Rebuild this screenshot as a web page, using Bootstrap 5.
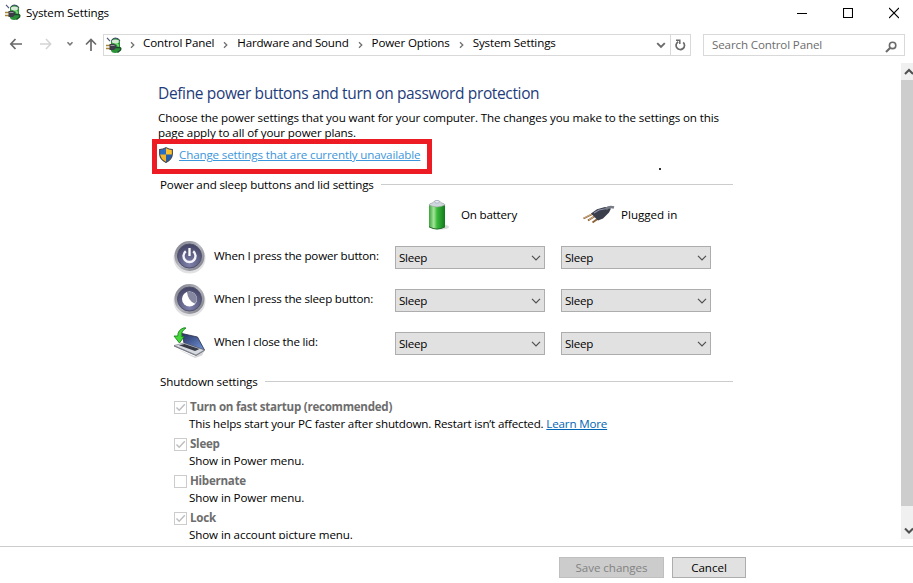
<!DOCTYPE html>
<html lang="en">
<head>
<meta charset="utf-8">
<meta name="viewport" content="width=device-width, initial-scale=1">
<title>System Settings</title>
<link href="https://cdn.jsdelivr.net/npm/bootstrap@5.3.0/dist/css/bootstrap.min.css" rel="stylesheet">
<style>
html,body{height:583px;overflow:hidden}
body{font-family:"Open Sans","Noto Sans",sans-serif;font-size:11.6px;line-height:16px;letter-spacing:-.14px;color:#000;background:#fff;width:913px}
svg{display:block;flex:none}
.title-bar{height:27px;padding:0 0 2px 5px}
.title-text{margin-left:5px}
.window-controls{gap:36px;margin-right:14px}
.tools{height:36px;padding:7px 8px 0 9px}
.history{height:20px}
.history .recent{margin-left:13px}
.history .up{margin-left:11px}
.address{width:588px;height:22px;border:1px solid #d9d9d9;margin-left:6px}
.address .place{margin-left:2px}
.crumb-sep{margin:0 9px}
.crumb-sep:first-child{margin:0 8px}
.crumb-wide{letter-spacing:-.2px}
.search-box{width:202px;height:22px;border:1px solid #d9d9d9;color:#6d6d6d;margin-left:12px;padding:0 7px 1px 8px}
.refresh{width:20px;border-left:1px solid #d9d9d9}
.pane{height:476px}
.content{padding:19px 0 0 158px;width:901px}
.main-title{font-size:15.5px;line-height:22px;letter-spacing:-.36px;color:#1e3c7b}
.intro{line-height:15px;margin-top:6px;letter-spacing:-.11px}
.callout-box{width:280px;height:35px;border:5px solid #ed1c24;margin:-1px 0 0 -6px;padding:0 0 3px 2px;position:relative}
.admin-link{color:#3c96dc;margin-left:6px}
.stray-dot{width:2px;height:2px;background:#333;margin:28px 0 0 227px}
.rule{height:1px;background:#ccc;margin:0 0 1px 7px}
.section-head{width:573px;margin:3px 0 0 2px;height:16px}
.section-head.shutdown{margin-top:9px}
.sources{height:43px;padding-left:269px}
.src-battery{margin-left:12px;letter-spacing:-.2px}
.src-plug{margin-left:5px;letter-spacing:0}
.plug-icon{margin-left:65px}
.set-row{height:43px;padding-left:15px}
.set-icon{margin-bottom:2px}
.pick{width:150px;height:23px;background:#e1e1e1;border:1px solid #adadad;padding:0 3px;color:#000;margin-right:16px;letter-spacing:-.28px}
.set-label{width:181px;margin:0 0 3px 8px;letter-spacing:-.2px}
.opts{margin-top:9px}
.opt{height:37px;padding-left:16px}
.opt-title{font-weight:700;color:#6d6d6d;letter-spacing:-.27px}
.tick{width:13px;height:13px;border:1px solid #ccc;margin-right:3px}
.opt-desc{margin:1px 0 0 15px;letter-spacing:-.11px}
.opt-desc.tight{letter-spacing:-.17px}
.learn{color:#0066b4}
.scroll{width:12px;background:#f0f0f0}
.thumb{height:426px;background:#cdcdcd}
.foot{margin-top:7px;height:37px;border-top:1px solid #ccc;padding:10px 0 0 559px;gap:8px}
.cmd{height:21px;border:1px solid #adadad;background:#e1e1e1;color:#000;font-size:inherit;line-height:17px;padding:0;letter-spacing:-.05px}
.cmd:disabled{background:#ccc;border-color:#bfbfbf;color:#838383}
.save{width:105px}
.cancel{width:74px}
</style>
<script src="https://cdn.jsdelivr.net/npm/bootstrap@5.3.0/dist/js/bootstrap.bundle.min.js"></script>
</head>
<body class="text-nowrap">
<svg width="0" height="0" class="position-absolute">
<defs>
<linearGradient id="green" x1="0" x2="1"><stop offset="0" stop-color="#3aa33c"/><stop offset=".3" stop-color="#a6e59a"/><stop offset=".5" stop-color="#3cba3c"/><stop offset="1" stop-color="#0f7a1c"/></linearGradient>
<linearGradient id="ring" x1="0" y1="0" x2="1" y2="1"><stop offset="0" stop-color="#777784"/><stop offset=".5" stop-color="#b8b8c0"/><stop offset="1" stop-color="#74747f"/></linearGradient>
<radialGradient id="disc" cx=".5" cy=".85" r=".9"><stop offset="0" stop-color="#7f80ab"/><stop offset="1" stop-color="#3f405f"/></radialGradient>
<linearGradient id="screen" x1="0" y1="0" x2="1" y2="1"><stop offset="0" stop-color="#24305f"/><stop offset="1" stop-color="#7396dc"/></linearGradient>
<symbol id="i-app" viewBox="0 0 16 17">
<path d="M5 3.500Q6 .8 9.500 1q4 .3 4.500 3.500v8q-1 3.500-5 3.500-3 0-4-2z" fill="#2b9238"/>
<path d="M6 3.500q3-2 7 0L12.500 6Q9 7.500 6 5.500z" fill="#d9ead8"/>
<path d="M5.500 3.500Q7 .8 9.500 1q3.500.2 4.500 3" fill="none" stroke="#40456c"/>
<path d="M10 6.500q3 1 2 4M7 7q-1 1 0 2" fill="none" stroke="#7fe07e" stroke-width="1.500"/>
<path d="M1 .8l3 3.400" stroke="#50557a" stroke-width="1.200"/>
<path d="M0 8.500h4M0 11.500h4" stroke="#a98637" stroke-width="1.300"/>
<path d="M3.500 7h4.500l2 1.500v2.500L8 13H3.500z" fill="#3c3d48"/><path d="M4.500 8.500h4" stroke="#9898a0"/>
<path d="M10 10.500h3.500q2 .5 1 2.500l-3 2.500" fill="none" stroke="#184e27" stroke-width="1.400"/>
</symbol>
<symbol id="i-sep" viewBox="0 0 5 8"><path d="M1 1.200L3.800 4 1 6.800" fill="none" stroke="#707070" stroke-width="1.300"/></symbol>
<symbol id="i-chev" viewBox="0 0 10 6"><path d="M1 .8l4 4 4-4" fill="none" stroke="#505050" stroke-width="1.200"/></symbol>
<symbol id="i-check" viewBox="0 0 11 11"><path d="M1.500 5.500l2.700 2.800L9.800 2.300" fill="none" stroke="#bdbdbd" stroke-width="1.400"/></symbol>
<symbol id="i-shield" viewBox="0 0 14 16">
<path d="M7 .4Q4 2.200.5 2.500v4.500Q.8 12.500 7 15.600z" fill="#2b6fc4"/><path d="M7 .4q3 1.800 6.500 2.100v4.500Q13.200 12.500 7 15.600z" fill="#fbc02d"/>
<path d="M.6 7.500H7v8.100Q1 12.500.6 7.500z" fill="#f5b52a"/><path d="M7 7.500h6.400Q13 12.500 7 15.600z" fill="#2460ad"/>
<path d="M7 .6Q4 2.400.6 2.600V7Q.9 12.400 7 15.400 13.100 12.400 13.400 7V2.600Q10 2.400 7 .6z" fill="none" stroke="#4a4c50" stroke-width="1.100"/>
</symbol>
</defs>
</svg>

<header class="title-bar d-flex align-items-center">
<svg width="16" height="17"><use href="#i-app"/></svg>
<span class="title-text">System Settings</span>
<div class="window-controls d-flex align-items-center ms-auto">
<svg width="10" height="12"><path d="M0 6.500h10" stroke="#000"/></svg>
<svg width="10" height="12" viewBox="0 0 10 12"><path d="M.5 1.500h9v9h-9z" fill="none" stroke="#000" stroke-width="1.100"/></svg>
<svg width="10" height="12" viewBox="0 0 10 12"><path d="M0 1l10 10M10 1L0 11" stroke="#000" stroke-width="1.100"/></svg>
</div>
</header>

<nav class="tools d-flex">
<div class="history d-flex align-items-center">
<svg width="14" height="12" viewBox="0 0 14 12"><path d="M6.500 1L1.800 6l4.700 5M2 6h11" fill="none" stroke="#6a6a6a" stroke-width="1.700"/></svg>
<svg width="14" height="12" viewBox="0 0 14 12" class="ms-3"><path d="M7 1l4.700 5L7 11M12 6H1" fill="none" stroke="#d4d4d4" stroke-width="1.500"/></svg>
<svg width="8" height="6" viewBox="0 0 8 6" class="recent"><path d="M1.500 1.200L4 3.800l2.500-2.600" fill="none" stroke="#777" stroke-width="1.500"/></svg>
<svg width="12" height="13" viewBox="0 0 12 13" class="up"><path d="M1 6.500l5-5 5 5M6 2v11" fill="none" stroke="#6a6a6a" stroke-width="1.700"/></svg>
</div>
<div class="address d-flex align-items-center">
<svg width="16" height="17" class="place"><use href="#i-app"/></svg>
<div class="d-flex align-items-center pb-1">
<svg width="5" height="8" class="crumb-sep mt-1"><use href="#i-sep"/></svg><span>Control Panel</span>
<svg width="5" height="8" class="crumb-sep mt-1"><use href="#i-sep"/></svg><span class="crumb-wide">Hardware and Sound</span>
<svg width="5" height="8" class="crumb-sep mt-1"><use href="#i-sep"/></svg><span>Power Options</span>
<svg width="5" height="8" class="crumb-sep mt-1"><use href="#i-sep"/></svg><span>System Settings</span>
</div>
<svg width="10" height="7" viewBox="0 0 10 7" class="ms-auto me-1"><path d="M1.200 1.200L5 5l3.800-3.800" fill="none" stroke="#6a6a6a" stroke-width="1.900"/></svg>
<div class="refresh h-100 d-flex align-items-center justify-content-center">
<svg width="11" height="12" viewBox="0 0 11 12"><path d="M3.200 2.700a4.200 4.200 0 1 0 5 .6" fill="none" stroke="#6a6a6a" stroke-width="1.700"/><path d="M1 1.300h3.800v3.700" fill="none" stroke="#6a6a6a" stroke-width="1.500"/></svg>
</div>
</div>
<div class="search-box d-flex align-items-center justify-content-between">
<span>Search Control Panel</span>
<svg width="12" height="12" viewBox="0 0 12 12" class="mt-1"><circle cx="7.600" cy="4.400" r="3.200" fill="none" stroke="#6a6a6a" stroke-width="1.600"/><path d="M5.300 6.700L1 11" stroke="#6a6a6a" stroke-width="2"/></svg>
</div>
</nav>

<main class="pane d-flex overflow-hidden">
<div class="content">
<h1 class="main-title fw-normal mb-0">Define power buttons and turn on password protection</h1>
<p class="intro mb-0">Choose the power settings that you want for your computer. The changes you make to the settings on this<br>page apply to all of your power plans.</p>
<div class="d-flex">
<div class="callout-box d-flex align-items-center">
<svg width="14" height="16"><use href="#i-shield"/></svg>
<a href="#" class="admin-link">Change settings that are currently unavailable</a>
</div>
<div class="stray-dot"></div>
</div>
<div class="section-head d-flex align-items-center"><span>Power and sleep buttons and lid settings</span><div class="rule flex-grow-1"></div></div>
<div class="sources d-flex align-items-center">
<svg width="22" height="32" viewBox="0 0 22 32"><ellipse cx="15" cy="28" rx="7" ry="2.500" fill="#d9ddd9"/><path d="M2 6v22q8 4.500 16 0V6z" fill="url(#green)"/><path d="M2 6q0-1.500 4-2.300L7.500 2q2.500-1.200 5 0L14 3.700q4 .8 4 2.300-8 4-16 0z" fill="#cfd6de" stroke="#8fa194" stroke-width=".6"/><ellipse cx="10" cy="2.800" rx="2.500" ry="1.200" fill="#f4f6fa" stroke="#8088a0" stroke-width=".5"/><path d="M2 27.800q8 4.500 16 0" fill="none" stroke="#2a6e33"/></svg>
<span class="src-battery">On battery</span>
<svg width="34" height="20" viewBox="0 0 34 20" class="plug-icon"><path d="M1.500 13.500l10-5M6 15.500l7-4.500M10.500 17.500l7-5" stroke="#8d6234" stroke-width="1.900"/><path d="M2 13l9-4.500M7 14.800l6-4" stroke="#efd0a0" stroke-width=".7"/><path d="M9 8.500L15 4.200l8-2.200 6 1.500-2 4-6 6-5 2z" fill="#3b3e4b"/><path d="M12 8l5-3 8-1.500" fill="none" stroke="#8b92a8" stroke-width="1.200"/><path d="M24 4q3-3 8-1.500" fill="none" stroke="#777b84" stroke-width="2.500"/></svg>
<span class="src-plug">Plugged in</span>
</div>

<div class="set-row d-flex align-items-center">
<svg width="33" height="34" viewBox="0 0 33 34" class="set-icon"><ellipse cx="16.500" cy="18" rx="16" ry="15.500" fill="#e1e1e4"/><circle cx="16.500" cy="16" r="15" fill="url(#ring)"/><circle cx="16.500" cy="16" r="12" fill="url(#disc)" stroke="#50516b"/><path d="M12.800 11.300a6 6 0 1 0 7.400 0" fill="none" stroke="#f4f4fa" stroke-width="2.400"/><path d="M16.500 8v8" stroke="#fff" stroke-width="2.300"/></svg>
<span class="set-label">When I press the power button:</span>
<button class="pick d-flex align-items-center justify-content-between"><span>Sleep</span><svg width="10" height="6"><use href="#i-chev"/></svg></button>
<button class="pick d-flex align-items-center justify-content-between"><span>Sleep</span><svg width="10" height="6"><use href="#i-chev"/></svg></button>
</div>
<div class="set-row d-flex align-items-center">
<svg width="33" height="34" viewBox="0 0 33 34" class="set-icon"><ellipse cx="16.500" cy="18" rx="16" ry="15.500" fill="#e1e1e4"/><circle cx="16.500" cy="16" r="15" fill="url(#ring)"/><circle cx="16.500" cy="16" r="12" fill="url(#disc)" stroke="#50516b"/><circle cx="16.500" cy="16" r="7.500" fill="#fff"/><path d="M14 9Q21 7.500 23.600 14q1 4-1.800 6.500Q15 18 14 9z" fill="#85869f"/></svg>
<span class="set-label">When I press the sleep button:</span>
<button class="pick d-flex align-items-center justify-content-between"><span>Sleep</span><svg width="10" height="6"><use href="#i-chev"/></svg></button>
<button class="pick d-flex align-items-center justify-content-between"><span>Sleep</span><svg width="10" height="6"><use href="#i-chev"/></svg></button>
</div>
<div class="set-row d-flex align-items-center">
<svg width="33" height="32" viewBox="0 0 33 32" class="set-icon"><path d="M4 22l18 7.500 9-5-2 4-7 2.500z" fill="#d5d5d8"/><path d="M9 6.500l15.500 3.500L31.500 23 11 16z" fill="url(#screen)" stroke="#272d45" stroke-width=".8"/><path d="M1 18.500l10-2.500 20.500 7-8.500 5z" fill="#d6d9df" stroke="#6b707c" stroke-width=".6"/><path d="M6 18.300l5.500-1.300 15 5-4.500 2z" fill="#353a46"/><path d="M1 18.500v1l22 9.500 8.500-5v-1l-8.500 5z" fill="#70747e"/><path d="M11 .8Q4.500 3 4.800 9H1l5.500 7 4.500-6.500H8.300Q8 4 13 1z" fill="#46d83b" stroke="#17831b" stroke-width=".9"/></svg>
<span class="set-label">When I close the lid:</span>
<button class="pick d-flex align-items-center justify-content-between"><span>Sleep</span><svg width="10" height="6"><use href="#i-chev"/></svg></button>
<button class="pick d-flex align-items-center justify-content-between"><span>Sleep</span><svg width="10" height="6"><use href="#i-chev"/></svg></button>
</div>

<div class="section-head shutdown d-flex align-items-center"><span>Shutdown settings</span><div class="rule flex-grow-1"></div></div>
<div class="opts">
<div class="opt">
<div class="d-flex align-items-center"><div class="tick"><svg width="11" height="11"><use href="#i-check"/></svg></div><span class="opt-title">Turn on fast startup (recommended)</span></div>
<div class="opt-desc tight">This helps start your PC faster after shutdown. Restart isn’t affected. <a href="#" class="learn">Learn More</a></div>
</div>
<div class="opt">
<div class="d-flex align-items-center"><div class="tick"><svg width="11" height="11"><use href="#i-check"/></svg></div><span class="opt-title">Sleep</span></div>
<div class="opt-desc">Show in Power menu.</div>
</div>
<div class="opt">
<div class="d-flex align-items-center"><div class="tick"></div><span class="opt-title">Hibernate</span></div>
<div class="opt-desc">Show in Power menu.</div>
</div>
<div class="opt">
<div class="d-flex align-items-center"><div class="tick"><svg width="11" height="11"><use href="#i-check"/></svg></div><span class="opt-title">Lock</span></div>
<div class="opt-desc">Show in account picture menu.</div>
</div>
</div>
</div>
<div class="scroll d-flex flex-column">
<svg width="12" height="17" viewBox="0 0 12 17"><path d="M4 11l4-4 4 4" fill="none" stroke="#505050" stroke-width="2"/></svg>
<div class="thumb"></div>
<svg width="12" height="17" viewBox="0 0 12 17" class="mt-auto"><path d="M4 6.500l4 4 4-4" fill="none" stroke="#505050" stroke-width="2"/></svg>
</div>
</main>

<footer class="foot d-flex">
<button class="cmd save" disabled>Save changes</button>
<button class="cmd cancel">Cancel</button>
</footer>
</body>
</html>
